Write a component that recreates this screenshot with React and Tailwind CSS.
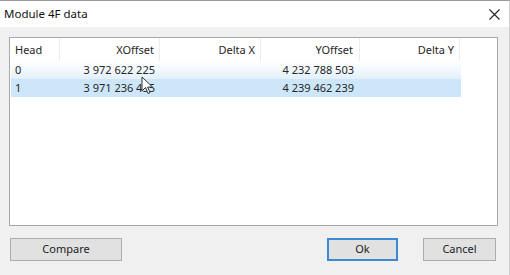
const columns = [
  { key: "head", label: "Head", width: "w-[50px]", align: "text-left pl-[5px]" },
  { key: "x", label: "XOffset", width: "w-[100px]", align: "text-right pr-[5px]" },
  { key: "dx", label: "Delta X", width: "w-[101px]", align: "text-right pr-[5px]" },
  { key: "y", label: "YOffset", width: "w-[99px]", align: "text-right pr-[6px]" },
  { key: "dy", label: "Delta Y", width: "w-[100px]", align: "text-right pr-[5px]" },
];

const rows = [
  { head: "0", x: "3 972 622 225", dx: "", y: "4 232 788 503", dy: "", state: "hover" },
  { head: "1", x: "3 971 236 455", dx: "", y: "4 239 462 239", dy: "", state: "selected" },
];

const Cursor = () => (
  <svg
    className="absolute left-[141px] top-[75px]"
    width="13"
    height="19"
    viewBox="0 0 13 19"
  >
    <path
      d="M1 1 L1 15 L4.5 11.5 L7 17.5 L9 16.6 L6.6 11 L11.5 11 Z"
      fill="#ffffff"
      stroke="#333"
      strokeWidth="1"
      strokeLinejoin="round"
    />
  </svg>
);

const Button = ({ children, primary, className }) => (
  <button
    className={`h-[23px] text-[11px] text-[#222] bg-[#e1e1e1] ${
      primary ? "border-2 border-[#3c8ad6]" : "border border-[#adadad]"
    } ${className}`}
  >
    {children}
  </button>
);

export default function App() {
  return (
    <div
      className="w-[510px] h-[275px] bg-[#f0f0f0] border-t border-[#9a9a9a] border-r border-r-[#cfcfcf] flex flex-col relative"
      style={{ fontFamily: '"Noto Sans", "Open Sans", sans-serif' }}
    >
      <div className="h-[26px] bg-white flex items-center justify-between pl-[4px] pr-[9px]">
        <span className="text-[11.5px] text-[#111]">Module 4F data</span>
        <svg width="11" height="11" viewBox="0 0 11 11">
          <path d="M0.5 0.5 L10.5 10.5 M10.5 0.5 L0.5 10.5" stroke="#222" strokeWidth="1.1" />
        </svg>
      </div>

      <div className="mt-[10px] ml-[9px] w-[489px] h-[189px] bg-white border border-[#a8a8a8] text-[11px] text-[#262626]">
        <div className="flex h-[23px] items-center">
          {columns.map((col) => (
            <div
              key={col.key}
              className={`${col.width} ${col.align} h-full pt-[2px] flex items-center border-r border-[#ececec] ${
                col.align.startsWith("text-right") ? "justify-end" : ""
              }`}
            >
              {col.label}
            </div>
          ))}
        </div>
        {rows.map((row) => (
          <div
            key={row.head}
            className={`flex h-[18px] items-center w-[450px] ml-[1px] ${
              row.state === "selected"
                ? "bg-[#cde6fa]"
                : "bg-gradient-to-b from-[#ffffff] to-[#e3f0fb]"
            }`}
          >
            {columns.map((col) => (
              <div
                key={col.key}
                className={`${col.width} ${col.align} ${
                  col.key === "head" ? "-ml-[1px]" : ""
                } flex items-center ${col.align.startsWith("text-right") ? "justify-end" : ""}`}
              >
                {row[col.key]}
              </div>
            ))}
          </div>
        ))}
      </div>

      <div className="flex items-center mt-[12px] pl-[10px] pr-[13px]">
        <Button className="w-[112px]">Compare</Button>
        <div className="flex-1" />
        <Button primary className="w-[71px]">Ok</Button>
        <Button className="w-[73px] ml-[25px]">Cancel</Button>
      </div>

      <Cursor />
    </div>
  );
}
